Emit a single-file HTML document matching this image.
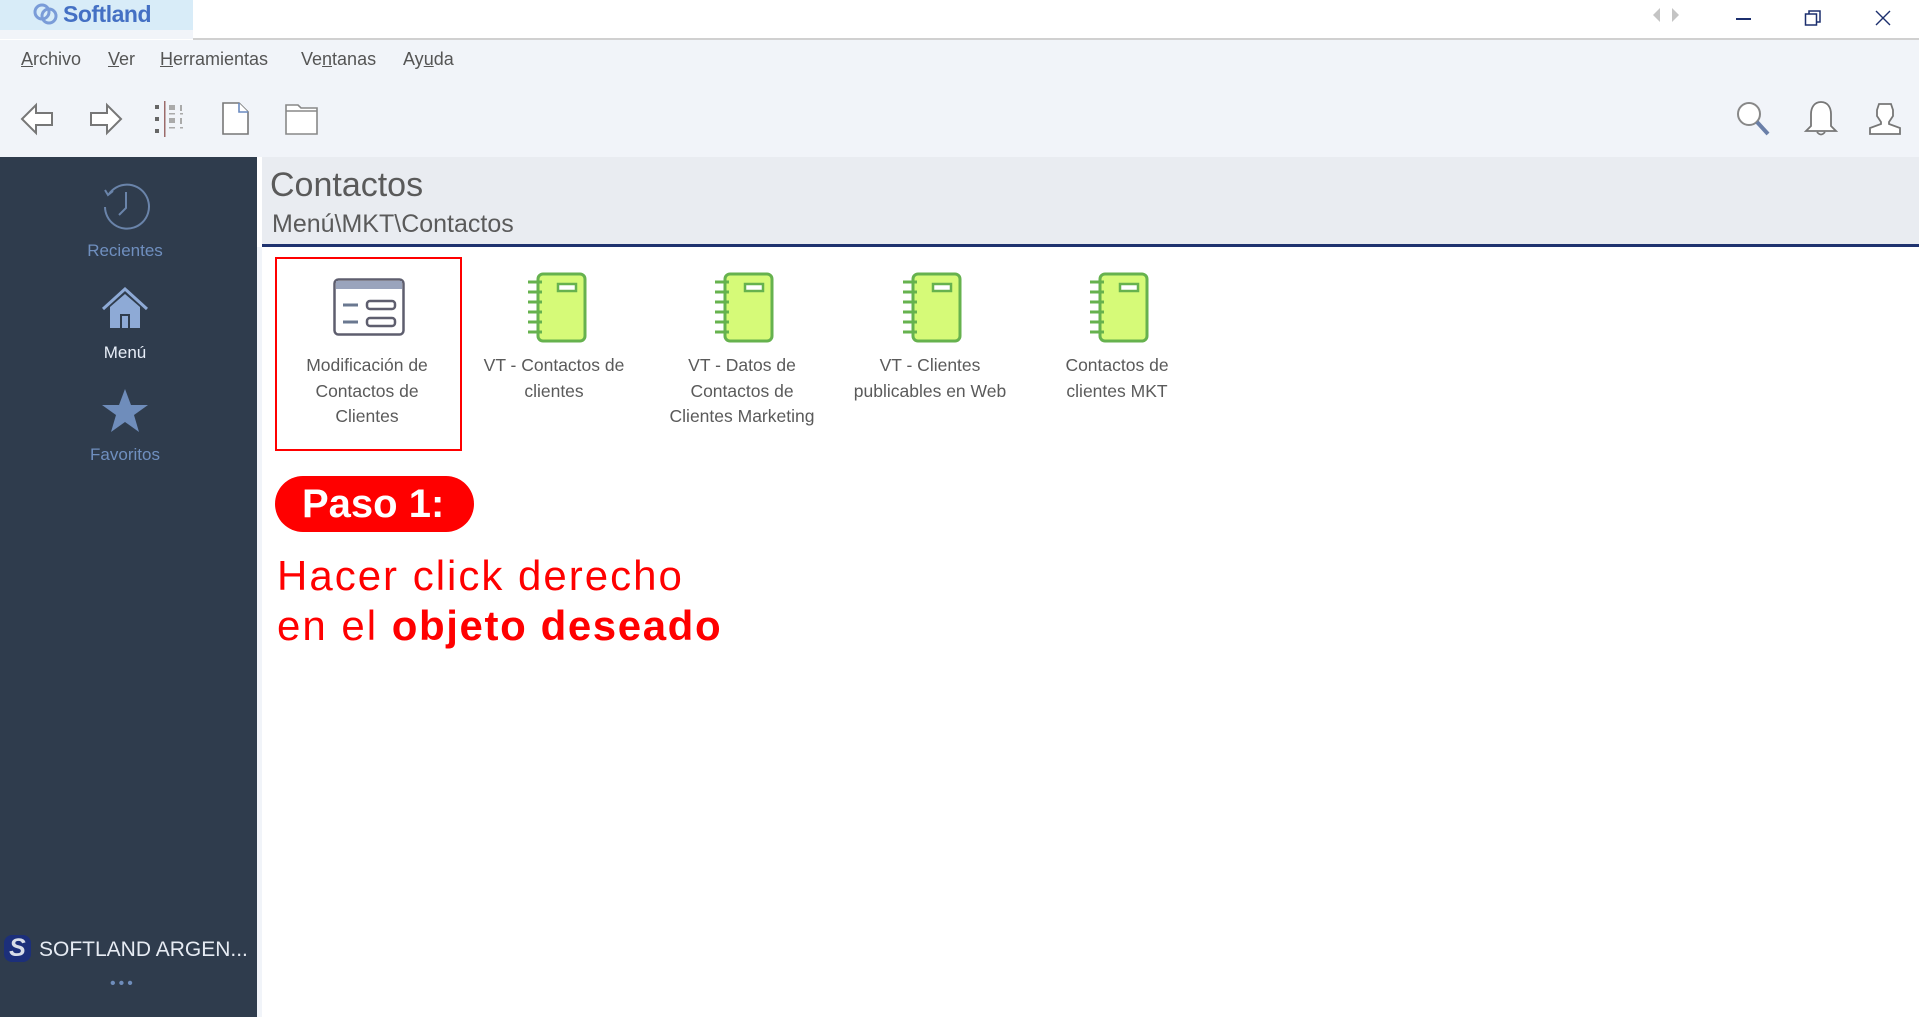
<!DOCTYPE html>
<html><head><meta charset="utf-8">
<style>
*{margin:0;padding:0;box-sizing:border-box}
body{width:1919px;height:1017px;overflow:hidden;background:#fff;font-family:"Liberation Sans","DejaVu Sans",sans-serif;position:relative}
.a{position:absolute}
.menu span{position:absolute;top:49px;font-size:18px;color:#555;}
.lbl{position:absolute;width:190px;text-align:center;font-size:17.5px;line-height:25.5px;color:#5a5a5a;top:353px}
.side{color:#6f8fbf;font-size:17px;text-align:center;width:250px;left:0}
</style></head><body>
<!-- title bar -->
<div class="a" style="left:0;top:0;width:193px;height:30px;background:#d8ecf8"></div>
<div class="a" style="left:0;top:30px;width:193px;height:9px;background:#f1f4f9"></div>
<svg class="a" style="left:32px;top:2px" width="28" height="24" fill="none" stroke="#7a9cd8" stroke-width="3"><circle cx="10" cy="10" r="7"/><circle cx="17" cy="14" r="7"/></svg>
<div class="a" style="left:63px;top:1px;font-size:23px;font-weight:bold;color:#4470c4;letter-spacing:-0.5px">Softland</div>
<div class="a" style="left:193px;top:38px;width:1726px;height:2px;background:#d0d0d0"></div>
<svg class="a" style="left:1650px;top:5px" width="40" height="20"><polygon points="10,3 10,17 3,10" fill="#c4c4c4"/><polygon points="22,3 22,17 29,10" fill="#c4c4c4"/></svg>
<div class="a" style="left:1736px;top:18px;width:15px;height:1.5px;background:#1c2f6e"></div>
<svg class="a" style="left:1804px;top:9px" width="18" height="18" fill="none" stroke="#1c2f6e" stroke-width="1.5"><rect x="1.5" y="5" width="11" height="11"/><path d="M5 5V2H16V13H12.5"/></svg>
<svg class="a" style="left:1874px;top:9px" width="18" height="18" stroke="#1c2f6e" stroke-width="1.4"><path d="M2 2L16 16M16 2L2 16"/></svg>
<!-- menu/toolbar bg -->
<div class="a" style="left:0;top:40px;width:1919px;height:117px;background:#f1f4f9"></div>
<div class="menu">
<span style="left:21px"><u>A</u>rchivo</span>
<span style="left:108px"><u>V</u>er</span>
<span style="left:160px"><u>H</u>erramientas</span>
<span style="left:301px">Ve<u>n</u>tanas</span>
<span style="left:403px">Ay<u>u</u>da</span>
</div>
<svg class="a" style="left:20px;top:101px" width="36" height="36" fill="#fff" stroke="#777" stroke-width="2"><path d="M2 18L16 4V12H32V24H16V32Z"/></svg>
<svg class="a" style="left:87px;top:101px" width="36" height="36" fill="#fff" stroke="#777" stroke-width="2"><path d="M34 18L20 4V12H4V24H20V32Z"/></svg>
<svg class="a" style="left:153px;top:101px" width="36" height="36"><g fill="#666"><rect x="2" y="4" width="4" height="4"/><rect x="2" y="16" width="4" height="4"/><rect x="2" y="28" width="4" height="4"/></g><rect x="11" y="0" width="1.5" height="36" fill="#9b6b6b"/><g fill="#aaa"><rect x="16" y="4" width="6" height="5"/><rect x="16" y="17" width="6" height="5"/><rect x="27" y="4" width="2" height="6"/><rect x="27" y="17" width="2" height="6"/><rect x="16" y="12" width="6" height="1.5"/><rect x="16" y="26" width="6" height="1.5"/><rect x="27" y="12" width="3" height="1.5"/><rect x="27" y="26" width="3" height="1.5"/></g></svg>
<svg class="a" style="left:220px;top:101px" width="32" height="36" fill="#fff" stroke="#777" stroke-width="1.6"><path d="M3 2H19L28 11V33H3Z"/><path d="M19 2V11H28" stroke="#6a8ac0"/></svg>
<svg class="a" style="left:284px;top:102px" width="36" height="34" fill="#fff" stroke="#888" stroke-width="1.6"><path d="M2 3H14L17 6H33V32H2Z"/><path d="M2 9H33"/></svg>
<svg class="a" style="left:1735px;top:100px" width="38" height="38" fill="none" stroke="#888" stroke-width="2"><circle cx="14" cy="14" r="11" fill="#fff"/><path d="M22 22L33 34" stroke-width="4" stroke="#6a7fa8"/></svg>
<svg class="a" style="left:1803px;top:100px" width="36" height="38" fill="#fff" stroke="#777" stroke-width="1.8"><path d="M18 2C11 2 8 8 8 14V26L3 31H33L28 26V14C28 8 25 2 18 2Z"/><path d="M14 32Q18 37 22 32" fill="none"/></svg>
<svg class="a" style="left:1867px;top:100px" width="36" height="38" fill="#fff" stroke="#777" stroke-width="1.8"><path d="M12 4H24L26 10V16L22 22V24L33 28V34H3V28L14 24V22L10 16V10Z"/></svg>
<!-- sidebar -->
<div class="a" style="left:0;top:157px;width:257px;height:860px;background:#2f3c4d"></div>
<svg class="a" style="left:101px;top:182px" width="50" height="50" fill="none" stroke="#6a84aa" stroke-width="2"><path d="M8 12A22 22 0 1 1 4 25"/><path d="M4 8L7 13L12 9" /><path d="M25 10V26L18 33"/></svg>
<div class="a side" style="top:241px">Recientes</div>
<svg class="a" style="left:100px;top:287px" width="50" height="44"><path d="M3 22L25 2L47 22" fill="none" stroke="#8eaad6" stroke-width="3"/><path d="M10 20L25 7L40 20V41H10Z" fill="#8eaad6"/><rect x="20" y="27" width="10" height="14" fill="#2f3c4d"/><rect x="22" y="29" width="6" height="12" fill="#8eaad6"/></svg>
<div class="a side" style="top:343px;color:#e8eef8">Menú</div>
<svg class="a" style="left:100px;top:388px" width="50" height="46"><polygon points="25,1 31,17 48,17 34,27 39,44 25,34 11,44 16,27 2,17 19,17" fill="#6f8dbb"/></svg>
<div class="a side" style="top:445px">Favoritos</div>
<div class="a" style="left:4px;top:935px;width:27px;height:27px;border-radius:8px;background:#1c2f7a;color:#d8dde8;font-weight:bold;font-size:25px;line-height:27px;text-align:center;font-style:italic">S</div>
<div class="a" style="left:39px;top:938px;font-size:21px;color:#e6ebf3">SOFTLAND ARGEN...</div>
<div class="a" style="left:110px;top:975px;font-size:16px;color:#6f8dbb;letter-spacing:3px">•••</div>
<!-- header -->
<div class="a" style="left:262px;top:157px;width:1657px;height:88px;background:#e9ecf1"></div>
<div class="a" style="left:262px;top:244px;width:1657px;height:3px;background:#1f336f"></div>
<div class="a" style="left:270px;top:166px;font-size:34px;color:#5a5a5a">Contactos</div>
<div class="a" style="left:272px;top:210px;font-size:25px;color:#5a5a5a">Menú\MKT\Contactos</div>
<div class="a" style="left:257px;top:247px;width:5px;height:770px;background:#f1f4f9"></div>
<!-- items -->
<div class="a" style="left:275px;top:257px;width:187px;height:194px;border:2.5px solid #f00"></div>
<svg class="a" style="left:333px;top:278px" width="72" height="58"><rect x="1.5" y="1.5" width="69" height="55" rx="4" fill="#fff" stroke="#5e5e6e" stroke-width="2.5"/><rect x="3" y="3" width="66" height="8" fill="#9aa4bc"/><g stroke="#6a7890" stroke-width="3"><path d="M10 27H25M10 44H25"/></g><rect x="34" y="23" width="28" height="8" rx="3" fill="#fff" stroke="#5e5e6e" stroke-width="2.5"/><rect x="34" y="40" width="28" height="8" rx="3" fill="#fff" stroke="#5e5e6e" stroke-width="2.5"/></svg>
<div class="lbl" style="left:272px">Modificación de<br>Contactos de<br>Clientes</div>
<svg width="0" height="0" style="position:absolute"><defs><g id="nb"><rect x="12" y="2" width="47" height="67" rx="5" fill="#d6fa78" stroke="#66b24e" stroke-width="3"/><rect x="32" y="12" width="18" height="7" fill="#fff" stroke="#66b24e" stroke-width="2.5"/><g stroke="#66b24e" stroke-width="3"><path d="M2 10H16M2 20H16M2 30H16M2 40H16M2 50H16M2 60H16"/></g></g></defs></svg>
<svg class="a" style="left:526px;top:272px" width="62" height="72"><use href="#nb"/></svg>
<svg class="a" style="left:713px;top:272px" width="62" height="72"><use href="#nb"/></svg>
<svg class="a" style="left:901px;top:272px" width="62" height="72"><use href="#nb"/></svg>
<svg class="a" style="left:1088px;top:272px" width="62" height="72"><use href="#nb"/></svg>
<div class="lbl" style="left:459px">VT - Contactos de<br>clientes</div>
<div class="lbl" style="left:647px;width:190px">VT - Datos de<br>Contactos de<br>Clientes Marketing</div>
<div class="lbl" style="left:835px">VT - Clientes<br>publicables en Web</div>
<div class="lbl" style="left:1022px">Contactos de<br>clientes MKT</div>
<!-- annotation -->
<div class="a" style="left:275px;top:476px;width:199px;height:56px;border-radius:28px;background:#f00;color:#fff;font-weight:bold;font-size:40px;line-height:56px;padding-left:27px;letter-spacing:0px">Paso 1:</div>
<div class="a" style="left:277px;top:551px;font-size:42px;line-height:50px;color:#f00;letter-spacing:2px">Hacer click derecho<br>en el <b style="letter-spacing:1.6px">objeto deseado</b></div>
</body></html>
